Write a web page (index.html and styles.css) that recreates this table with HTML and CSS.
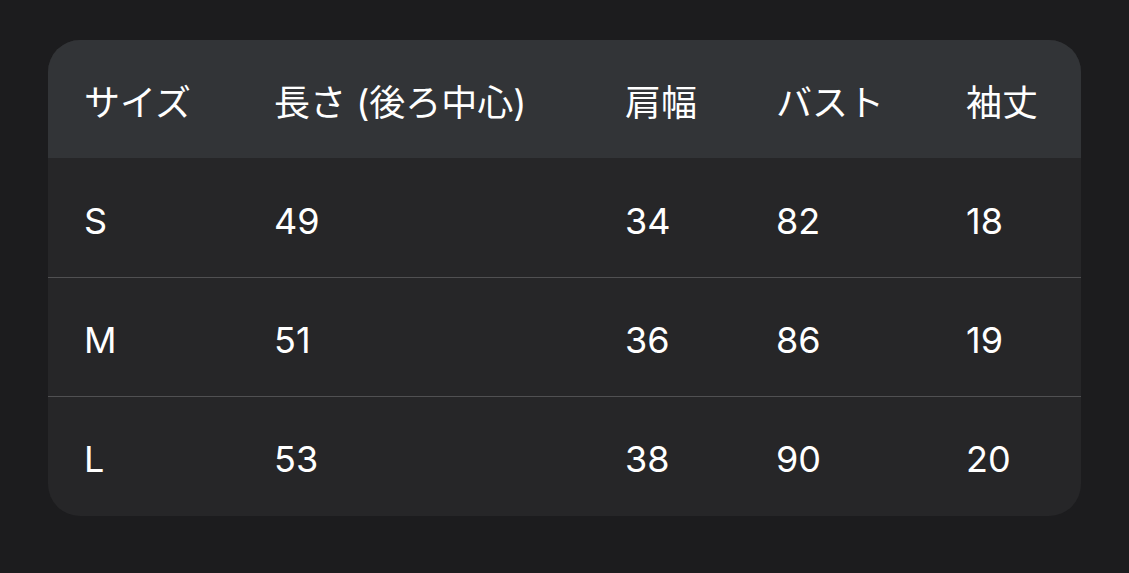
FILE: index.html
```html
<!DOCTYPE html>
<html lang="ja">
<head>
<meta charset="utf-8">
<link rel="stylesheet" href="styles.css">
</head>
<body>
<div class="card">
  <div class="row head">
    <div>サイズ</div><div>長さ (後ろ中心)</div><div>肩幅</div><div>バスト</div><div>袖丈</div>
  </div>
  <div class="row">
    <div>S</div><div>49</div><div>34</div><div>82</div><div>18</div>
  </div>
  <div class="row sep">
    <div>M</div><div>51</div><div>36</div><div>86</div><div>19</div>
  </div>
  <div class="row sep">
    <div>L</div><div>53</div><div>38</div><div>90</div><div>20</div>
  </div>
</div>
</body>
</html>
```
FILE: styles.css
```css
html, body {
  margin: 0;
  padding: 0;
  background: #1c1c1e;
}
body {
  padding: 40px 48px 0 48px;
  font-family: Inter, "Noto Sans CJK JP", sans-serif;
  color: #ffffff;
}
.card {
  width: 1033px;
  height: 476px;
  background: #262628;
  border-radius: 32px;
  overflow: hidden;
}
.row {
  display: grid;
  grid-template-columns: 190px 351px 151px 190px 1fr;
  align-items: center;
  padding-left: 36px;
  padding-top: 6px;
  height: 119px;
  box-sizing: border-box;
  font-size: 36px;
  line-height: 1;
}
.row.head {
  background: #323437;
  height: 118px;
  padding-top: 7px;
}
.row.sep {
  border-top: 1px solid #505052;
}
```
